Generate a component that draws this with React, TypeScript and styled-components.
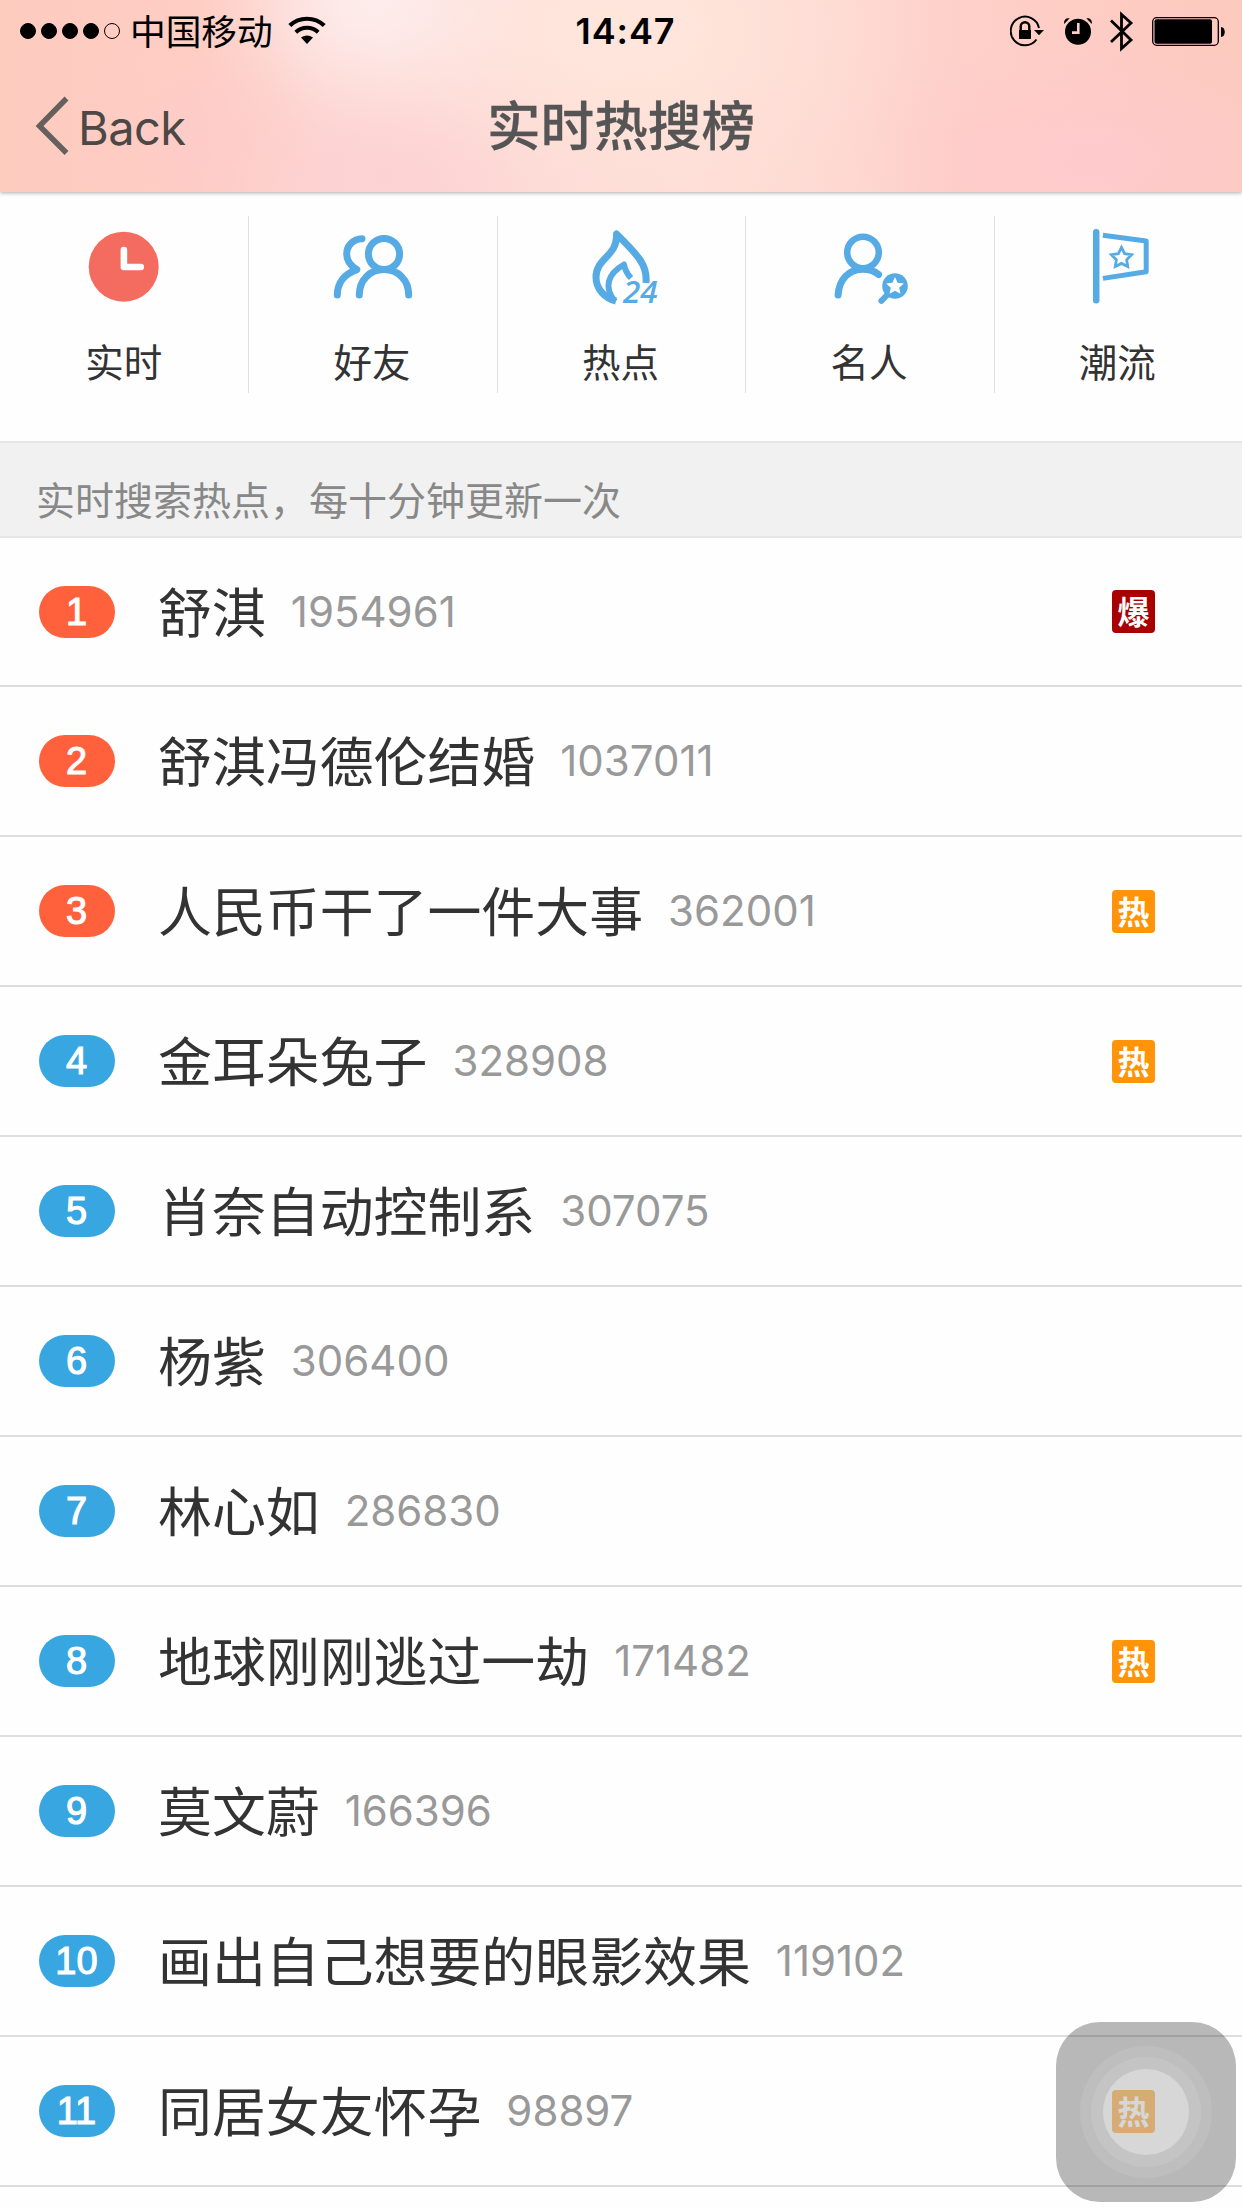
import React from "react";
import styled, { createGlobalStyle } from "styled-components";

const latin = `Inter, Roboto, "Noto Sans CJK SC", sans-serif`;
const cjk = `"Noto Sans CJK SC", sans-serif`;
const BLUE = "#57abe5";

const GlobalStyle = createGlobalStyle`
  * { box-sizing: border-box; }
  body { margin: 0; background: #fefefe; font-family: ${latin}; }
`;

const Screen = styled.main`
  position: relative;
  width: 1242px;
  height: 2208px;
  overflow: hidden;
  background: #fefefe;
`;

/* A soft glow whose alpha eases out, so that no edge shows where it ends. */
const glow = (rgb: string, alpha: number, size: string, at: string) =>
  `radial-gradient(ellipse ${size} at ${at}, ` +
  [1, 0.92, 0.72, 0.48, 0.26, 0.1, 0.025, 0]
    .map((k, i, all) => `rgba(${rgb}, ${(alpha * k).toFixed(3)}) ${Math.round((100 * i) / (all.length - 1))}%`)
    .join(", ") +
  ")";

const Header = styled.header`
  position: relative;
  height: 192px;
  background:
    ${glow("253, 237, 237", 0.95, "210px 170px", "375px 0px")},
    ${glow("255, 231, 220", 0.85, "360px 220px", "610px 30px")},
    ${glow("255, 202, 204", 0.95, "330px 170px", "1090px 160px")},
    ${glow("254, 203, 203", 0.6, "150px 140px", "215px 140px")},
    ${glow("253, 209, 211", 0.85, "240px 150px", "390px 175px")},
    linear-gradient(90deg, #fecbbf 0, #fecdc3 200px, #fdd6d0 320px, #fddbd6 480px, #fedfd7 690px, #fedad3 840px, #fed0c9 960px, #fdcabf 1200px);
  box-shadow: 0 1px 4px rgba(0, 0, 0, 0.32);
`;

const StatusBar = styled.div`
  display: grid;
  grid-template-columns: 1fr auto 1fr;
  height: 60px;
  padding: 0 16px 0 20px;
  color: #000;
`;

const StatusGroup = styled.div<{ $end?: boolean }>`
  display: flex;
  align-items: center;
  justify-content: ${(p) => (p.$end ? "flex-end" : "flex-start")};
`;

const SignalDots = styled.div`
  display: flex;
  gap: 5px;
`;

const Dot = styled.span<{ $empty?: boolean }>`
  width: 16px;
  height: 16px;
  border-radius: 50%;
  border: 1px solid #000;
  background: ${(p) => (p.$empty ? "transparent" : "#000")};
`;

const Carrier = styled.span`
  margin: 0 15px 0 10px;
  padding-bottom: 2px;
  font: 400 35.7px/58px ${cjk};
`;

const Clock = styled.span`
  font: 600 36px/60px ${latin};
  letter-spacing: 0.9px;
  padding: 1px 0 0 5px;
`;

const NavBar = styled.nav`
  display: grid;
  grid-template-columns: 1fr auto 1fr;
  align-items: center;
  height: 132px;
  padding: 0 34px;
  color: #555;
`;

const BackButton = styled.a`
  display: flex;
  align-items: center;
  gap: 8px;
  color: #4b4846;
  font: 400 47px/60px ${latin};
  letter-spacing: -0.6px;
`;

const BackLabel = styled.span`
  padding-top: 4px;
`;

const Title = styled.h1`
  margin: 0;
  padding-bottom: 6px;
  font: 500 53.6px/80px ${cjk};
  -webkit-text-stroke: 0.3px #555;
`;

const Tabs = styled.section`
  display: grid;
  grid-template-columns: repeat(5, 1fr);
  height: 249px;
  padding-top: 24px;
`;

const Tab = styled.div`
  display: flex;
  flex-direction: column;
  align-items: center;
  height: 177px;
  padding-top: 9px;
  box-shadow: 1px 0 0 #e0e0e0;
  &:last-child {
    box-shadow: none;
  }
`;

const TabLabel = styled.span`
  margin: 22px 1px 0 0;
  font: 400 38.5px/58px ${cjk};
  color: #333;
`;

const Notice = styled.p`
  display: flex;
  align-items: center;
  height: 97px;
  margin: 0;
  padding: 17px 36px 0;
  border: solid #e6e6e6;
  border-width: 2px 0;
  background: #f1f1f1;
  color: #888;
  font: 400 39px/58px ${cjk};
`;

const List = styled.ol`
  margin: 0;
  padding: 0;
  list-style: none;
`;

const Row = styled.li`
  display: flex;
  align-items: center;
  height: 150px;
  padding: 0 87px 0 39px;
  border-bottom: 2px solid #dedede;
  &:first-child {
    height: 149px;
  }
`;

const Rank = styled.span<{ $top: boolean }>`
  display: flex;
  align-items: center;
  justify-content: center;
  width: 76px;
  height: 52px;
  padding-right: 1px;
  border-radius: 26px;
  background: ${(p) => (p.$top ? "#ff613c" : "#38a6e1")};
  color: #fff;
  font: 400 38px/52px "Liberation Sans", Arial, sans-serif;
  -webkit-text-stroke: 1.1px #fff;
`;

const Name = styled.span`
  margin-left: 43px;
  padding-bottom: 4px;
  color: #333;
  font: 400 53.9px/80px ${cjk};
`;

const Count = styled.span`
  flex: 1;
  margin-left: 25px;
  color: #999;
  font: 400 42px/60px ${latin};
`;

const Tag = styled.span<{ $color: string }>`
  display: flex;
  align-items: center;
  justify-content: center;
  width: 43px;
  height: 43px;
  padding-bottom: 2px;
  border-radius: 4px;
  background: ${(p) => p.$color};
  color: #fff;
  font: 700 32px/41px ${cjk};
`;

const AssistiveTouch = styled.div`
  position: absolute;
  right: 6px;
  bottom: 6px;
  display: grid;
  place-items: center;
  width: 180px;
  height: 180px;
  border-radius: 44px;
  background: rgba(0, 0, 0, 0.275);
`;

const Ring = styled.div<{ $size: number; $alpha: number }>`
  display: grid;
  place-items: center;
  width: ${(p) => p.$size}px;
  height: ${(p) => p.$size}px;
  border-radius: 50%;
  background: rgba(255, 255, 255, ${(p) => p.$alpha});
`;

function starPoints(cx: number, cy: number, outer: number, inner: number) {
  return Array.from({ length: 10 }, (_, i) => {
    const r = i % 2 ? inner : outer;
    const a = (Math.PI / 5) * i - Math.PI / 2;
    return `${(cx + r * Math.cos(a)).toFixed(2)},${(cy + r * Math.sin(a)).toFixed(2)}`;
  }).join(" ");
}

const WifiIcon = () => (
  <svg width="38" height="30" viewBox="0 0 38 30" fill="none" stroke="#000">
    <path d="M1.8 9.6A25 25 0 0 1 36.2 9.6" strokeWidth="4.2" />
    <path d="M7.8 16.2A16.3 16.3 0 0 1 30.2 16.2" strokeWidth="4" />
    <path d="M13 21.6Q19 17.2 25 21.6L19 28Z" fill="#000" stroke="none" />
  </svg>
);

const StatusIcons = () => (
  <svg width="216" height="44" viewBox="1010 8 216 44">
    <g fill="none" stroke="#000" strokeWidth="2">
      <path d="M1036.5 38.5A14.3 14.3 0 1 1 1039 27" />
      <path d="M1020.7 30V25.5a4.3 4.3 0 0 1 8.6 0V30" strokeWidth="2.4" />
    </g>
    <path d="M1034 29H1044L1039 34.3ZM1019 29h12v9h-12z" />
    <circle cx="1078" cy="30.8" r="13" />
    <path d="M1064.2 23c-.6-4 1.6-6 5.5-5.7zM1091.8 23c.6-4-1.6-6-5.5-5.7z" />
    <path d="M1078.3 22v9.6h-6.3" fill="none" stroke="#fed0c8" strokeWidth="2.6" />
    <path d="M1111 19.5L1131 39L1121.5 47.5V13.5L1131 22L1111 41" fill="none" stroke="#000" strokeWidth="2.8" />
    <rect x="1152.7" y="16.7" width="65.6" height="27.6" rx="4" fill="none" stroke="#000" strokeWidth="1.3" />
    <rect x="1154.5" y="18.3" width="57.5" height="24.5" rx="2" />
    <path d="M1221 26c5 0 5 10 0 10z" />
  </svg>
);

const BackIcon = () => (
  <svg width="36" height="60" viewBox="0 0 36 60" fill="none" stroke="#65605d" strokeWidth="5.5">
    <path d="M32.5 2.5L5.5 30L32.5 57" />
  </svg>
);

const TabSvg = ({ children }: { children: React.ReactNode }) => (
  <svg width="84" height="84" viewBox="0 0 84 84" fill="none" stroke={BLUE} strokeWidth="7" strokeLinecap="round" strokeLinejoin="round" overflow="visible">
    {children}
  </svg>
);

const ClockIcon = () => (
  <TabSvg>
    <circle cx="41.7" cy="41.7" r="35" fill="#f46c60" stroke="none" />
    <path d="M41.9 25V42H58.8" stroke="#fff" strokeWidth="6.6" />
  </TabSvg>
);

const FriendsIcon = () => (
  <TabSvg>
    <circle cx="53" cy="29" r="15.6" />
    <path d="M28.3 70C28.3 55 38.8 44.6 53 44.6S77.7 55 77.7 70" />
    <path d="M31 13.7C22.3 14 15.7 20.5 15.7 29C15.7 36 19.8 41 25.8 44.6C13.3 49 6.3 58 6.3 70" />
  </TabSvg>
);

const HotIcon = () => (
  <TabSvg>
    <path d="M67 58C68.5 41 61 32 37.5 9C39 31 17 33 17 52C17 64 25.5 73 37 76" strokeLinecap="butt" />
    <path d="M36 76.500C24.500 62 28.500 49 45 39.500C46 45 48 49 52 53" strokeWidth="6" strokeLinecap="butt" />
    <text x="44" y="78.300" fill={BLUE} stroke="none" fontFamily="Open Sans, sans-serif" fontWeight="600" fontStyle="italic" fontSize="31.500">24</text>
  </TabSvg>
);

const CelebrityIcon = () => (
  <TabSvg>
    <circle cx="36" cy="27.5" r="15.8" strokeWidth="6.5" />
    <path d="M11.1 70C12.1 54 22.1 44.3 36 44.3C42.1 44.3 47.1 46 51.6 49.5" />
    <path d="M62.1 68L54.4 75.8" strokeWidth="6" />
    <circle cx="68" cy="61" r="12.8" fill={BLUE} stroke="none" />
    <polygon points={starPoints(68, 61.3, 9.3, 4.4)} fill="#fff" stroke="none" />
  </TabSvg>
);

const TrendIcon = () => (
  <TabSvg>
    <path d="M20.2 7.2V75.2" strokeWidth="6.5" />
    <path d="M26.9 10.2L70.2 16V46.7L26.9 53.4" strokeWidth="5" strokeLinecap="butt" />
    <polygon points={starPoints(45.5, 33, 10.6, 5.4)} strokeWidth="2.8" strokeLinejoin="miter" />
  </TabSvg>
);

const tabs = [
  { label: "实时", Icon: ClockIcon },
  { label: "好友", Icon: FriendsIcon },
  { label: "热点", Icon: HotIcon },
  { label: "名人", Icon: CelebrityIcon },
  { label: "潮流", Icon: TrendIcon },
];

const tagColors: Record<string, string> = { 爆: "#a80000", 热: "#ff9409" };

const topics: { name: string; count: number; tag?: string }[] = [
  { name: "舒淇", count: 1954961, tag: "爆" },
  { name: "舒淇冯德伦结婚", count: 1037011 },
  { name: "人民币干了一件大事", count: 362001, tag: "热" },
  { name: "金耳朵兔子", count: 328908, tag: "热" },
  { name: "肖奈自动控制系", count: 307075 },
  { name: "杨紫", count: 306400 },
  { name: "林心如", count: 286830 },
  { name: "地球刚刚逃过一劫", count: 171482, tag: "热" },
  { name: "莫文蔚", count: 166396 },
  { name: "画出自己想要的眼影效果", count: 119102 },
  { name: "同居女友怀孕", count: 98897, tag: "热" },
];

export default function App() {
  return (
    <Screen>
      <GlobalStyle />
      <Header>
        <StatusBar>
          <StatusGroup>
            <SignalDots>
              {[0, 1, 2, 3, 4].map((i) => (
                <Dot key={i} $empty={i === 4} />
              ))}
            </SignalDots>
            <Carrier>中国移动</Carrier>
            <WifiIcon />
          </StatusGroup>
          <Clock>14:47</Clock>
          <StatusGroup $end>
            <StatusIcons />
          </StatusGroup>
        </StatusBar>
        <NavBar>
          <BackButton>
            <BackIcon />
            <BackLabel>Back</BackLabel>
          </BackButton>
          <Title>实时热搜榜</Title>
        </NavBar>
      </Header>
      <Tabs>
        {tabs.map(({ label, Icon }) => (
          <Tab key={label}>
            <Icon />
            <TabLabel>{label}</TabLabel>
          </Tab>
        ))}
      </Tabs>
      <Notice>实时搜索热点，每十分钟更新一次</Notice>
      <List>
        {topics.map((t, i) => (
          <Row key={t.name}>
            <Rank $top={i < 3}>{i + 1}</Rank>
            <Name>{t.name}</Name>
            <Count>{t.count}</Count>
            {t.tag && <Tag $color={tagColors[t.tag]}>{t.tag}</Tag>}
          </Row>
        ))}
      </List>
      <AssistiveTouch>
        <Ring $size={132} $alpha={0.09}>
          <Ring $size={110} $alpha={0.1}>
            <Ring $size={86} $alpha={0.32} />
          </Ring>
        </Ring>
      </AssistiveTouch>
    </Screen>
  );
}
